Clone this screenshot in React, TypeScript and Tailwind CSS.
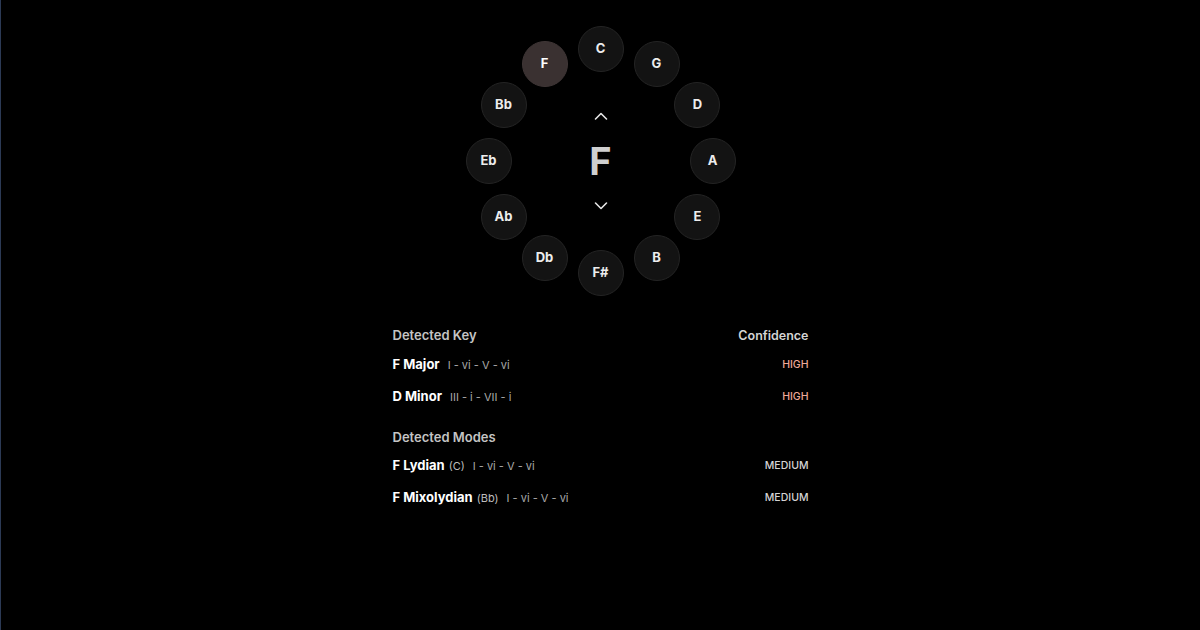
import React, { useState } from 'react';

const KEYS = ['C', 'G', 'D', 'A', 'E', 'B', 'F#', 'Db', 'Ab', 'Eb', 'Bb', 'F'];
const RADIUS = 112;

interface KeyRow {
  name: string;
  parent?: string;
  progression: string;
  confidence: 'HIGH' | 'MEDIUM';
}

const detectedKeys: KeyRow[] = [
  { name: 'F Major', progression: 'I - vi - V - vi', confidence: 'HIGH' },
  { name: 'D Minor', progression: 'III - i - VII - i', confidence: 'HIGH' },
];

const detectedModes: KeyRow[] = [
  { name: 'F Lydian', parent: '(C)', progression: 'I - vi - V - vi', confidence: 'MEDIUM' },
  { name: 'F Mixolydian', parent: '(Bb)', progression: 'I - vi - V - vi', confidence: 'MEDIUM' },
];

const Chevron = ({ up }: { up?: boolean }) => (
  <svg width="16" height="10" viewBox="0 0 16 10" fill="none" stroke="#e5e5e5" strokeWidth="1.6" strokeLinecap="round" strokeLinejoin="round">
    {up ? <path d="M2.5 8 L8 2.5 L13.5 8" /> : <path d="M2.5 2 L8 7.5 L13.5 2" />}
  </svg>
);

const Row = ({ row }: { row: KeyRow }) => (
  <div className="flex h-8 items-center justify-between">
    <div className="flex items-baseline">
      <span className="text-[13px] font-bold text-white">{row.name}</span>
      {row.parent && <span className="ml-1 text-[11px] text-[#bdbdbd]">{row.parent}</span>}
      <span className="ml-2 text-[11px] text-[#a8a8a8]">{row.progression}</span>
    </div>
    <span
      className={
        row.confidence === 'HIGH'
          ? 'text-[10.5px] font-medium text-[#f0a898]'
          : 'text-[10.5px] font-medium text-[#d4d4d4]'
      }
    >
      {row.confidence}
    </span>
  </div>
);

export default function App() {
  const [selected, setSelected] = useState('F');

  return (
    <div
      className="min-h-[630px] w-full border-l border-[#2c3a55] bg-black pt-[26px]"
      style={{ fontFamily: 'Inter, "Noto Sans", sans-serif' }}
    >
      {/* Circle of fifths */}
      <div className="relative mx-auto h-[270px] w-[270px]">
        {KEYS.map((k, i) => {
          const angle = (i * 30 * Math.PI) / 180;
          const x = 135 + RADIUS * Math.sin(angle) - 23;
          const y = 135 - RADIUS * Math.cos(angle) - 23;
          const active = k === selected;
          return (
            <button
              key={k}
              onClick={() => setSelected(k)}
              className={
                active
                  ? 'absolute flex h-[46px] w-[46px] items-center justify-center rounded-full border border-[#3f3636] bg-[#3a3131] text-[13px] font-bold text-white'
                  : 'absolute flex h-[46px] w-[46px] items-center justify-center rounded-full border border-[#242424] bg-[#131313] text-[13px] font-bold text-[#ededed]'
              }
              style={{ left: x, top: y }}
            >
              {k}
            </button>
          );
        })}
        <div className="absolute inset-0 flex flex-col items-center justify-center">
          <Chevron up />
          <span className="my-[20px] text-[38px] font-bold leading-[40px] text-[#cfcfcf]">{selected}</span>
          <Chevron />
        </div>
      </div>

      {/* Results */}
      <div className="mx-auto mt-[30px] w-[416px]">
        <div className="flex h-5 items-center justify-between">
          <span className="text-[13px] font-semibold text-[#c4c4c4]">Detected Key</span>
          <span className="text-[12.5px] font-semibold text-[#d4d4d4]">Confidence</span>
        </div>
        <div className="mt-[3px]">
          {detectedKeys.map((r) => (
            <Row key={r.name} row={r} />
          ))}
        </div>

        <div className="mt-[15px] flex h-5 items-center">
          <span className="text-[13px] font-semibold text-[#c4c4c4]">Detected Modes</span>
        </div>
        <div className="mt-[2px]">
          {detectedModes.map((r) => (
            <Row key={r.name} row={r} />
          ))}
        </div>
      </div>
    </div>
  );
}
